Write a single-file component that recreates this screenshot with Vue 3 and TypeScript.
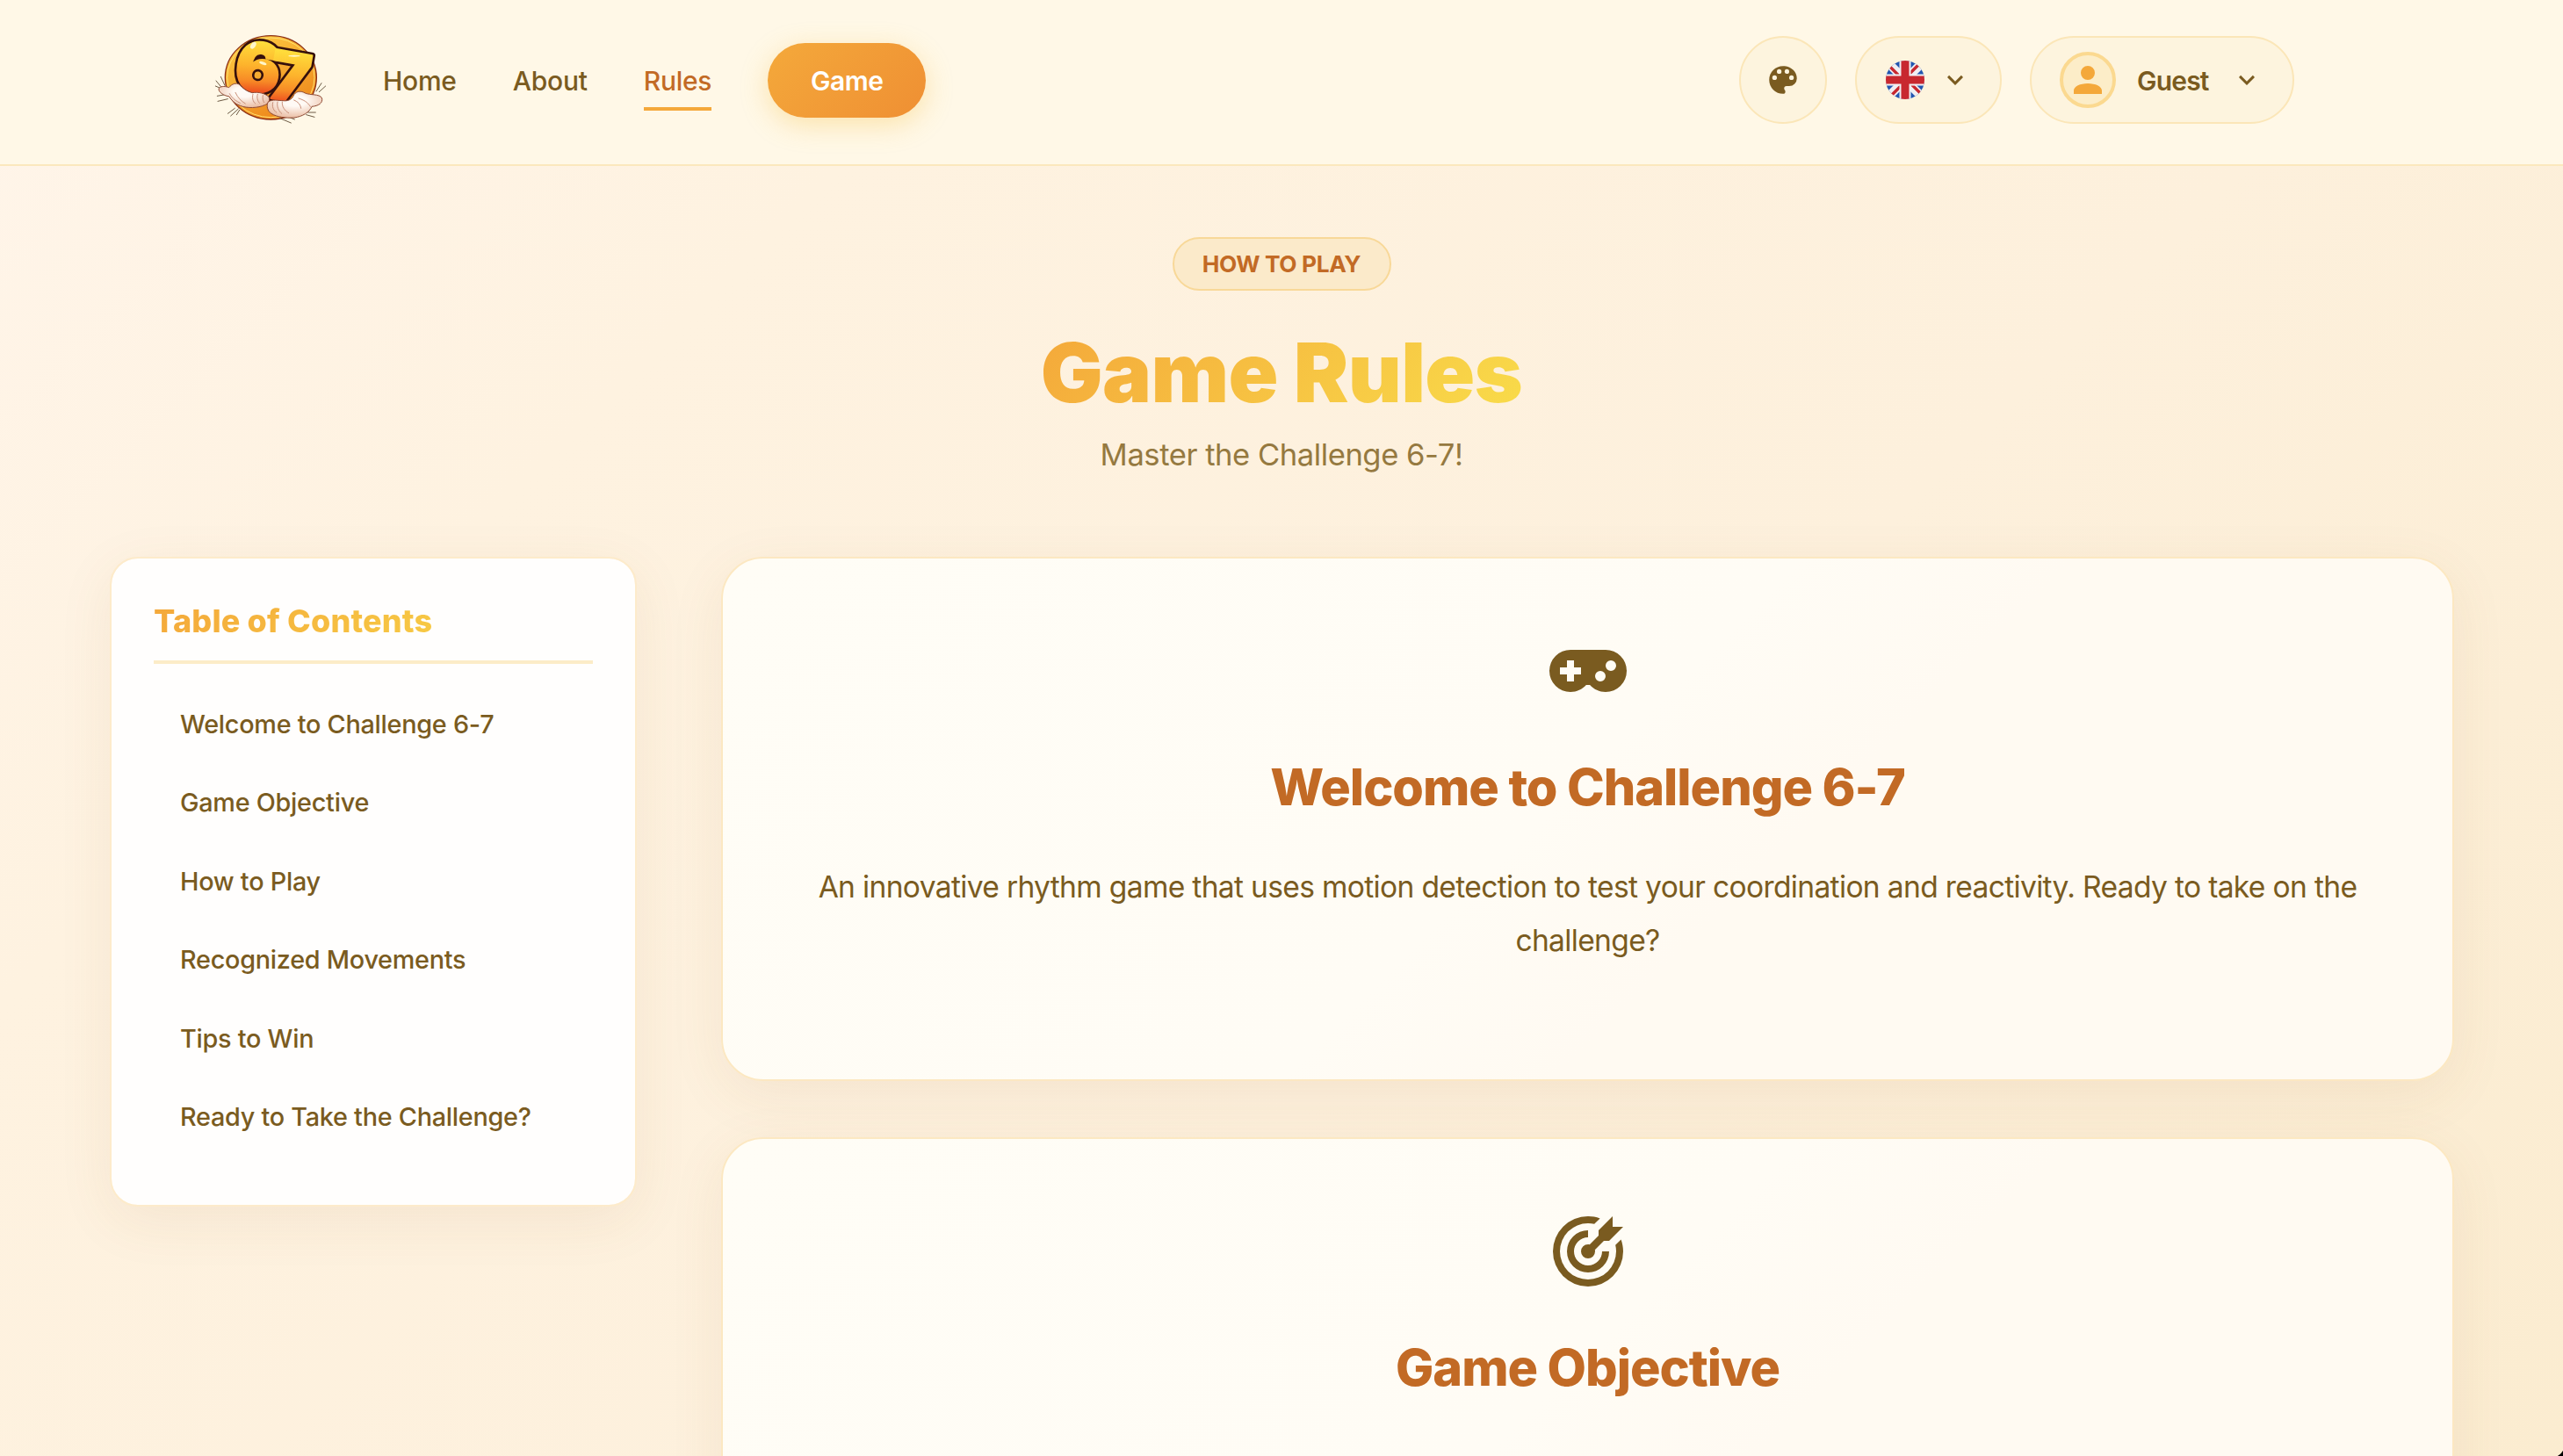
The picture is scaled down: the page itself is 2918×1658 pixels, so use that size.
<script setup lang="ts">
interface NavItem { label: string; active?: boolean }
interface Section { title: string; icon: string; text: string }

const nav: NavItem[] = [{ label: 'Home' }, { label: 'About' }, { label: 'Rules', active: true }]

const toc: string[] = [
  'Welcome to Challenge 6-7',
  'Game Objective',
  'How to Play',
  'Recognized Movements',
  'Tips to Win',
  'Ready to Take the Challenge?',
]

const chevron = 'M7.41,8.58L12,13.17L16.59,8.58L18,10L12,16L6,10L7.41,8.58Z'
const palette = 'M17.5,12A1.5,1.5 0 0,1 16,10.5A1.5,1.5 0 0,1 17.5,9A1.5,1.5 0 0,1 19,10.5A1.5,1.5 0 0,1 17.5,12M14.5,8A1.5,1.5 0 0,1 13,6.5A1.5,1.5 0 0,1 14.5,5A1.5,1.5 0 0,1 16,6.5A1.5,1.5 0 0,1 14.5,8M9.5,8A1.5,1.5 0 0,1 8,6.5A1.5,1.5 0 0,1 9.5,5A1.5,1.5 0 0,1 11,6.5A1.5,1.5 0 0,1 9.5,8M6.5,12A1.5,1.5 0 0,1 5,10.5A1.5,1.5 0 0,1 6.5,9A1.5,1.5 0 0,1 8,10.5A1.5,1.5 0 0,1 6.5,12M12,3A9,9 0 0,0 3,12A9,9 0 0,0 12,21A1.5,1.5 0 0,0 13.5,19.5C13.5,19.11 13.35,18.76 13.11,18.5C12.88,18.23 12.73,17.88 12.73,17.5A1.5,1.5 0 0,1 14.23,16H16A5,5 0 0,0 21,11C21,6.58 16.97,3 12,3Z'
const account = 'M12,4A4,4 0 0,1 16,8A4,4 0 0,1 12,12A4,4 0 0,1 8,8A4,4 0 0,1 12,4M12,14C16.42,14 20,15.79 20,18V20H4V18C4,15.79 7.58,14 12,14Z'
const gamepad = 'M7,6H17A6,6 0 0,1 23,12A6,6 0 0,1 17,18C15.22,18 13.63,17.23 12.53,16H11.47C10.37,17.23 8.78,18 7,18A6,6 0 0,1 1,12A6,6 0 0,1 7,6M6,9V11H4V13H6V15H8V13H10V11H8V9H6M15.5,12A1.5,1.5 0 0,0 14,13.5A1.5,1.5 0 0,0 15.5,15A1.5,1.5 0 0,0 17,13.5A1.5,1.5 0 0,0 15.5,12M18.5,9A1.5,1.5 0 0,0 17,10.5A1.5,1.5 0 0,0 18.5,12A1.5,1.5 0 0,0 20,10.5A1.5,1.5 0 0,0 18.5,9Z'
const bullseye = 'M12,2A10,10 0 0,0 2,12A10,10 0 0,0 12,22A10,10 0 0,0 22,12C22,10.84 21.79,9.69 21.39,8.61L19.79,10.21C19.93,10.8 20,11.4 20,12A8,8 0 0,1 12,20A8,8 0 0,1 4,12A8,8 0 0,1 12,4C12.6,4 13.2,4.07 13.79,4.21L15.4,2.6C14.31,2.21 13.16,2 12,2M19,2L15,6V7.5L12.45,10.05C12.3,10 12.15,10 12,10A2,2 0 0,0 10,12A2,2 0 0,0 12,14A2,2 0 0,0 14,12C14,11.85 14,11.7 13.95,11.55L16.5,9H18L22,5H19V2M12,6A6,6 0 0,0 6,12A6,6 0 0,0 12,18A6,6 0 0,0 18,12H16A4,4 0 0,1 12,16A4,4 0 0,1 8,12A4,4 0 0,1 12,8V6Z'

const sections: Section[] = [
  {
    title: 'Welcome to Challenge 6-7',
    icon: gamepad,
    text: 'An innovative rhythm game that uses motion detection to test your coordination and reactivity. Ready to take on the challenge?',
  },
  {
    title: 'Game Objective',
    icon: bullseye,
    text: '',
  },
]
</script>

<template>
  <div class="page">
    <header class="header">
      <svg class="logo" viewBox="60 50 390 330">
        <defs>
          <linearGradient id="coin" x1="0" y1="0" x2="0.5" y2="1">
            <stop offset="0" stop-color="#ffcf45" />
            <stop offset="1" stop-color="#ee8a1d" />
          </linearGradient>
          <linearGradient id="digit" gradientUnits="userSpaceOnUse" x1="30" y1="-172" x2="50" y2="4">
            <stop offset="0" stop-color="#ffe03c" />
            <stop offset="0.5" stop-color="#fdb32c" />
            <stop offset="0.8" stop-color="#f78a26" />
            <stop offset="1" stop-color="#ee5420" />
          </linearGradient>
          <radialGradient id="glove" cx="0.5" cy="0.35" r="0.7">
            <stop offset="0.3" stop-color="#fffaf5" />
            <stop offset="1" stop-color="#e8b79b" />
          </radialGradient>
        </defs>
        <ellipse cx="265" cy="207" rx="156" ry="143" fill="url(#coin)" stroke="#8c2f14" stroke-width="4" />
        <ellipse cx="265" cy="207" rx="149" ry="136" fill="none" stroke="#ffe070" stroke-width="3" />
        <g stroke="#6d5b45" stroke-width="3" stroke-linecap="round">
          <path d="M78 218l18 22M94 204l14 30M76 236l14 6M82 270l22-4M84 288l34-8M118 330l24-18M128 338l26-24M148 334l10-16M420 254l18-28M430 256l22-20M386 334l28 8M392 326l26 0M296 346l38 16M332 344l14 6" />
        </g>
        <g class="digit-edge">
          <text x="0" y="0" transform="translate(133 241) rotate(9)">6</text>
          <text x="0" y="0" transform="translate(248 274) rotate(10)">7</text>
        </g>
        <g class="digit-face">
          <text x="0" y="0" transform="translate(133 241) rotate(9)">6</text>
          <text x="0" y="0" transform="translate(248 274) rotate(10)">7</text>
        </g>
        <g fill="#fff6c9">
          <ellipse cx="205" cy="97" rx="8" ry="13" transform="rotate(35 205 97)" />
          <ellipse cx="238" cy="158" rx="13" ry="5" transform="rotate(20 238 158)" />
          <ellipse cx="345" cy="133" rx="20" ry="3" />
        </g>
        <g fill="url(#glove)" stroke="#8f4a33" stroke-width="3" stroke-linejoin="round">
          <path d="M88 243c8-8 24-6 34-2 10-12 24-18 36-10 12 14 26 24 44 28 20-4 44 2 56 14 6 12-2 24-14 28-22 10-60 12-84 2-18-6-30-20-38-32-12 0-40-14-34-28z" />
          <path d="M256 290c14-10 36-4 50-4 14 2 30-2 36-16 6-16 24-20 40-10 18 8 48 2 57 16 6 18-12 28-34 30-8 20-32 34-60 38-28 2-60-2-78-14-14-8-18-28-11-40z" />
        </g>
        <g fill="none" stroke="#c98f78" stroke-width="3" stroke-linecap="round">
          <path d="M124 262c10 18 24 26 36 32M144 258c8 18 20 30 34 38M204 264c-4 12 0 26 8 32M220 264c-4 10 0 24 6 30M238 268c-2 10 0 18 4 24M272 292c-4 14 2 28 12 34M288 290c-4 16 4 32 14 40M304 290c-2 16 8 30 22 38M344 284c14 6 22 14 24 28M360 278c18 6 30 12 40 28" />
        </g>
      </svg>

      <nav class="nav">
        <a v-for="item in nav" :key="item.label" class="nav-link" :class="{ active: item.active }">{{ item.label }}</a>
        <a class="play">Game</a>
      </nav>

      <div class="tools">
        <button class="pill round">
          <svg class="icon palette" viewBox="0 0 24 24"><path :d="palette" /></svg>
        </button>
        <button class="pill lang">
          <svg class="flag" viewBox="0 0 44 44">
            <defs><clipPath id="disc"><circle cx="22" cy="22" r="22" /></clipPath></defs>
            <g clip-path="url(#disc)">
              <rect width="44" height="44" fill="#2356b0" />
              <path d="M0 0L44 44M44 0L0 44" stroke="#f1eff2" stroke-width="10" />
              <path d="M0 2.2L22 24.2M44 -2L22 20M0 46L22 24M44 41.8L22 19.8" stroke="#c8282f" stroke-width="3.4" />
              <path d="M22 0V44M0 22H44" stroke="#f1eff2" stroke-width="13" />
              <path d="M22 0V44M0 22H44" stroke="#c8282f" stroke-width="9" />
            </g>
          </svg>
          <svg class="icon chevron" viewBox="0 0 24 24"><path :d="chevron" /></svg>
        </button>
        <button class="pill user">
          <span class="avatar"><svg class="icon person" viewBox="0 0 24 24"><path :d="account" /></svg></span>
          <span class="user-name">Guest</span>
          <svg class="icon chevron" viewBox="0 0 24 24"><path :d="chevron" /></svg>
        </button>
      </div>
    </header>

    <section class="hero">
      <span class="badge">HOW TO PLAY</span>
      <h1 class="title">Game Rules</h1>
      <p class="subtitle">Master the Challenge 6-7!</p>
    </section>

    <div class="layout">
      <aside class="toc">
        <h2 class="toc-title">Table of Contents</h2>
        <ul class="toc-list">
          <li v-for="entry in toc" :key="entry"><a>{{ entry }}</a></li>
        </ul>
      </aside>
      <main class="sections">
        <article v-for="section in sections" :key="section.title" class="card">
          <svg class="icon card-icon" viewBox="0 0 24 24"><path :d="section.icon" /></svg>
          <h2 class="card-title">{{ section.title }}</h2>
          <p class="card-text">{{ section.text }}</p>
        </article>
      </main>
    </div>
    <span class="corner"></span>
  </div>
</template>

<style>
body {
  margin: 0;
  overflow: hidden;
}
</style>

<style scoped>
.page {
  position: relative;
  box-sizing: border-box;
  width: 100vw;
  height: 100vh;
  overflow: hidden;
  background: linear-gradient(135deg, #fff5ea 0%, #fef2e0 25%, #fdf0dc 60%, #fbecd0 100%);
  color: #7a5b20;
  font-family: Inter, "Liberation Sans", sans-serif;
}

/* rounded window edge */
.corner {
  position: absolute;
  right: 0;
  bottom: 0;
  width: 6px;
  height: 6px;
  background: radial-gradient(circle at -8px -8px, transparent 15.5px, #000 16.5px);
}

.header {
  display: flex;
  align-items: center;
  box-sizing: border-box;
  height: 189px;
  padding: 0 306px 5px 240px;
  border-bottom: 2px solid #fbe8bd;
  background: #fff8e7;
}

.logo {
  width: 130px;
  height: 110px;
  overflow: visible;
}

.digit-edge,
.digit-face {
  font-family: Inter, sans-serif;
  font-size: 230px;
  font-weight: 900;
}

.digit-edge {
  fill: #35100c;
  stroke: #35100c;
  stroke-width: 23px;
  stroke-linejoin: round;
}

.digit-face {
  fill: url(#digit);
  stroke: url(#digit);
  stroke-width: 7px;
  stroke-linejoin: round;
}

.nav {
  display: flex;
  align-items: center;
  gap: 64px;
  margin-left: 66px;
}

.nav-link {
  position: relative;
  padding: 17px 0 15px;
  font-size: 30px;
  font-weight: 500;
  letter-spacing: -0.25px;
  line-height: 38px;
}

.nav-link.active {
  color: #c26a25;
}

.nav-link.active::after {
  content: "";
  position: absolute;
  right: 0;
  bottom: 0;
  left: 0;
  height: 4px;
  background: #f4a83a;
}

.play {
  box-sizing: border-box;
  width: 180px;
  height: 85px;
  border-radius: 43px;
  background: linear-gradient(135deg, #f4a93b, #ef8f33);
  box-shadow: 0 8px 30px rgba(244, 190, 60, 0.35);
  color: #fff;
  font-size: 30px;
  font-weight: 600;
  letter-spacing: -0.5px;
  line-height: 87px;
  text-align: center;
}

.tools {
  display: flex;
  align-items: center;
  gap: 32px;
  margin-left: auto;
}

.pill {
  display: flex;
  align-items: center;
  box-sizing: border-box;
  height: 100px;
  margin: 0;
  padding: 0;
  border: 2px solid #fbe6b8;
  border-radius: 50px;
  background: #fdf4de;
  color: #7a5b20;
  font-family: inherit;
}

.pill.round {
  justify-content: center;
  width: 100px;
}

.pill.lang {
  width: 167px;
  padding-left: 33px;
}

.pill.user {
  width: 301px;
  padding-left: 32px;
}

.icon {
  display: block;
  flex: none;
  fill: currentColor;
}

.palette {
  width: 42px;
  height: 42px;
}

.chevron {
  width: 36px;
  height: 36px;
}

.flag {
  display: block;
  width: 44px;
  height: 44px;
  margin-right: 17px;
}

.avatar {
  display: flex;
  align-items: center;
  justify-content: center;
  box-sizing: border-box;
  width: 64px;
  height: 64px;
  border: 4px solid #fbd990;
  border-radius: 50%;
  background: #fcedc8;
  color: #f4a83a;
}

.person {
  width: 48px;
  height: 48px;
}

.user-name {
  width: 107px;
  margin-left: 24px;
  padding-top: 1px;
  font-size: 30px;
  font-weight: 600;
  letter-spacing: -0.8px;
  line-height: 38px;
  text-align: left;
}

.hero {
  display: flex;
  flex-direction: column;
  align-items: center;
  padding-top: 81px;
}

.badge {
  box-sizing: border-box;
  width: 249px;
  height: 61px;
  border: 2px solid #f8d898;
  border-radius: 31px;
  background: #fbeaca;
  color: #c26a25;
  font-size: 26.3px;
  font-weight: 700;
  letter-spacing: -0.4px;
  line-height: 58px;
  text-align: center;
}

.title {
  margin: 41px 0 0;
  background: linear-gradient(135deg, #f4a83a, #f9dc4a);
  background-clip: text;
  color: transparent;
  font-size: 94px;
  font-weight: 900;
  letter-spacing: -0.7px;
  line-height: 104px;
}

.subtitle {
  margin: 13px 0 0;
  color: #957940;
  font-size: 34.6px;
  letter-spacing: -0.45px;
  line-height: 56px;
}

.layout {
  display: flex;
  align-items: flex-start;
  gap: 96px;
  padding: 89px 124px 0 125px;
}

.toc {
  flex: none;
  box-sizing: border-box;
  width: 600px;
  padding: 49px 48px 56px;
  border: 2px solid #fdebcb;
  border-radius: 32px;
  background: #fffefd;
  background-clip: padding-box;
  box-shadow: 0 16px 64px rgba(139, 90, 43, 0.08);
}

.toc-title {
  margin: 0;
  padding-bottom: 23px;
  border-bottom: 4px solid #fcecc8;
  background: linear-gradient(135deg, #f4a83a, #f9dc4a);
  background-clip: text;
  color: transparent;
  font-size: 36px;
  font-weight: 800;
  letter-spacing: 0.17px;
  line-height: 44px;
}

.toc-list {
  margin: 24px 0 0;
  padding: 0 0 0 30px;
  list-style: none;
  font-size: 28.8px;
  font-weight: 500;
  letter-spacing: -0.26px;
  line-height: 89.4px;
  white-space: nowrap;
}

.sections {
  display: flex;
  flex: 1;
  flex-direction: column;
  gap: 64px;
  min-width: 0;
}

.card {
  display: flex;
  flex-direction: column;
  align-items: center;
  box-sizing: border-box;
  height: 597px;
  padding: 80px 98px 0;
  border: 2px solid #fce8c2;
  border-radius: 48px;
  background: linear-gradient(135deg, #fffdf6 0%, #fffcf5 48%, #fffaf2 60%, #fffaf2 100%);
  box-shadow: 0 16px 64px rgba(139, 90, 43, 0.08);
}

.card-icon {
  width: 96px;
  height: 96px;
}

.card-title {
  margin: 49px 0 48px;
  color: #c26a25;
  font-size: 57.6px;
  font-weight: 800;
  letter-spacing: -1.05px;
  line-height: 70px;
}

.card-text {
  margin: 0;
  font-size: 33.6px;
  letter-spacing: -0.67px;
  line-height: 61px;
  text-align: center;
}
</style>
